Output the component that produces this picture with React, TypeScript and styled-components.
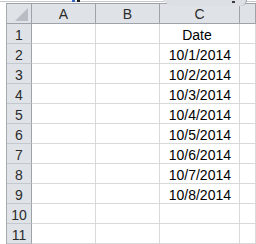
import {Fragment} from 'react';
import styled, {createGlobalStyle} from 'styled-components';

const COLORS = {
  headerBg: '#dfe3e8',
  headerLine: '#9ea3a9',
  headerSep: '#c3c8ce',
  grid: '#d9d9d9',
  frame: '#a7abb0',
  text: '#000000',
  headerText: '#2b2b2b',
};

const GlobalStyle = createGlobalStyle`
  html, body {
    margin: 0;
    padding: 0;
    background: #ffffff;
    overflow: hidden;
  }
  body {
    font-family: "Liberation Sans", Arial, sans-serif;
  }
`;

const Page = styled.div`
  width: 256px;
  height: 244px;
  overflow: hidden;
  display: flex;
  flex-direction: column;
`;

const FormulaBar = styled.div`
  height: 6px;
  border-bottom: 1px solid #c6c9cd;
  position: relative;
`;

const CutGlyph = styled.span`
  position: absolute;
  left: 72px;
  top: 0;
  width: 8px;
  height: 2px;
  background: linear-gradient(90deg, #3a66c4 0 3px, transparent 3px 5px, #202020 5px 8px);
`;

const ExpandButton = styled.div`
  position: absolute;
  left: 160px;
  top: -8px;
  width: 87px;
  height: 14px;
  border-radius: 0 0 6px 16px / 0 0 6px 14px;
  background: #dcdfe3;
  border-right: 1px solid #9da1a6;
  display: flex;
  justify-content: flex-end;
  align-items: flex-end;
  padding: 0 11px 3px 0;
  box-sizing: border-box;
`;

const ExpandGlyph = styled.span`
  width: 3px;
  height: 2px;
  background: #3c3c3c;
`;

const Gap = styled.div`
  height: 3px;
`;

const SheetFrame = styled.div`
  margin-left: 6px;
  border-left: 1px solid ${COLORS.frame};
  border-top: 1px solid ${COLORS.headerLine};
  flex: 1;
`;

const Sheet = styled.div`
  display: grid;
  grid-template-columns: 25px 64px 64px 80px 1fr;
  grid-auto-rows: 20px;
`;

const ColHeader = styled.div`
  background: ${COLORS.headerBg};
  border-right: 1px solid ${COLORS.headerLine};
  border-bottom: 1px solid ${COLORS.headerLine};
  color: ${COLORS.headerText};
  font-size: 14px;
  line-height: 21px;
  text-align: center;
`;

const Corner = styled(ColHeader)`
  position: relative;
`;

const CornerTriangle = styled.div`
  position: absolute;
  right: 3px;
  bottom: 2px;
  width: 0;
  height: 0;
  border-left: 13px solid transparent;
  border-bottom: 13px solid #b9bdc3;
`;

const RowHeader = styled.div`
  background: ${COLORS.headerBg};
  border-right: 1px solid ${COLORS.headerLine};
  border-bottom: 1px solid ${COLORS.headerSep};
  color: ${COLORS.headerText};
  font-size: 14px;
  line-height: 22px;
  text-align: center;
`;

const Cell = styled.div<{$align?: 'left' | 'center' | 'right'}>`
  border-right: 1px solid ${COLORS.grid};
  border-bottom: 1px solid ${COLORS.grid};
  color: ${COLORS.text};
  font-size: 14px;
  line-height: 22px;
  text-align: ${(p) => p.$align || 'left'};
  padding: 0 8px 0 3px;
  white-space: nowrap;
  overflow: hidden;
`;

const COLUMNS = ['A', 'B', 'C', ''];

const ROWS: {label: number; c: string; align: 'center' | 'right'}[] = [
  {label: 1, c: 'Date', align: 'center'},
  ...[1, 2, 3, 4, 5, 6, 7, 8].map((d) => ({
    label: d + 1,
    c: `10/${d}/2014`,
    align: 'right' as const,
  })),
  {label: 10, c: '', align: 'right'},
  {label: 11, c: '', align: 'right'},
];

export default function App() {
  return (
    <Page>
      <GlobalStyle />
      <FormulaBar>
        <CutGlyph />
        <ExpandButton>
          <ExpandGlyph />
        </ExpandButton>
      </FormulaBar>
      <Gap />
      <SheetFrame>
        <Sheet>
          <Corner>
            <CornerTriangle />
          </Corner>
          {COLUMNS.map((col, i) => (
            <ColHeader key={i}>{col}</ColHeader>
          ))}
          {ROWS.map((row) => (
            <Fragment key={row.label}>
              <RowHeader>{row.label}</RowHeader>
              <Cell />
              <Cell />
              <Cell $align={row.align}>{row.c}</Cell>
              <Cell />
            </Fragment>
          ))}
        </Sheet>
      </SheetFrame>
    </Page>
  );
}
